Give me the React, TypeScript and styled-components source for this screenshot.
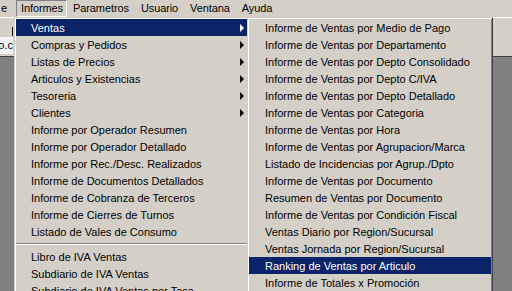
import styled, { createGlobalStyle } from 'styled-components';

const GlobalStyle = createGlobalStyle`
  html, body {
    margin: 0;
    padding: 0;
    overflow: hidden;
  }
`;

const Screen = styled.div`
  position: relative;
  width: 512px;
  height: 291px;
  overflow: hidden;
  background: #808080;
  font-family: "Liberation Sans", Tahoma, sans-serif;
  font-size: 11px;
  color: #000;
`;

const MenuBar = styled.div`
  display: flex;
  height: 17px;
  background: #d4d0c8;
`;

const BarItem = styled.div<{ $active?: boolean; $clipped?: boolean }>`
  box-sizing: border-box;
  height: 17px;
  line-height: 15px;
  padding: ${p => (p.$clipped ? '0 8px 0 0' : '0 5px')};
  border: 1px solid transparent;
  letter-spacing: -0.1px;
  ${p =>
    p.$active &&
    `
    border-color: #808080 #ffffff #ffffff #808080;
    padding: 0 3px 0 4px;
  `}
`;

const Toolbar = styled.div`
  display: flex;
  flex-direction: column;
  height: 40px;
  box-sizing: border-box;
  background: #d4d0c8;
  border-top: 1px solid #ffffff;
  border-bottom: 1px solid #404040;
`;

const ToolRow = styled.div`
  display: flex;
  height: 18px;
  align-items: center;
`;

const Caret = styled.div`
  width: 1px;
  height: 9px;
  margin-left: 12px;
  margin-top: 8px;
  background: #000;
`;

const Field = styled.div`
  width: 13px;
  height: 17px;
  display: flex;
  justify-content: flex-end;
  align-items: center;
  overflow: hidden;
  white-space: nowrap;
  background: #f4f4f4;
`;

const Dropdown = styled.div<{ $left: number; $width: number }>`
  position: absolute;
  top: 17px;
  left: ${p => p.$left}px;
  width: ${p => p.$width}px;
  box-sizing: border-box;
  padding: 1px;
  background: #d4d0c8;
  border: 1px solid;
  border-color: #d4d0c8 #404040 #404040 #d4d0c8;
  box-shadow: inset 1px 1px #ffffff, inset -1px -1px #808080;
`;

const Item = styled.div<{ $selected?: boolean; $indent: number }>`
  display: flex;
  align-items: center;
  height: 17px;
  padding-left: ${p => p.$indent}px;
  padding-right: 4px;
  white-space: nowrap;
  background: ${p => (p.$selected ? '#0a246a' : 'transparent')};
  color: ${p => (p.$selected ? '#ffffff' : '#000000')};
`;

const Arrow = styled.span<{ $selected?: boolean }>`
  margin-left: auto;
  width: 0;
  height: 0;
  border-top: 4px solid transparent;
  border-bottom: 4px solid transparent;
  border-left: 4px solid ${p => (p.$selected ? '#ffffff' : '#000000')};
`;

const Separator = styled.div`
  height: 0;
  margin: 3px 1px 3px 0;
  border-top: 1px solid #808080;
  border-bottom: 1px solid #ffffff;
`;

type Entry = { label: string; sub?: boolean } | 'sep';

const informes: Entry[] = [
  { label: 'Ventas', sub: true },
  { label: 'Compras y Pedidos', sub: true },
  { label: 'Listas de Precios', sub: true },
  { label: 'Articulos y Existencias', sub: true },
  { label: 'Tesoreria', sub: true },
  { label: 'Clientes', sub: true },
  { label: 'Informe por Operador Resumen' },
  { label: 'Informe por Operador Detallado' },
  { label: 'Informe por Rec./Desc. Realizados' },
  { label: 'Informe de Documentos Detallados' },
  { label: 'Informe de Cobranza de Terceros' },
  { label: 'Informe de Cierres de Turnos' },
  { label: 'Listado de Vales de Consumo' },
  'sep',
  { label: 'Libro de IVA Ventas' },
  { label: 'Subdiario de IVA Ventas' },
  { label: 'Subdiario de IVA Ventas por Tasa' },
];

const ventas = [
  'Informe de Ventas por Medio de Pago',
  'Informe de Ventas por Departamento',
  'Informe de Ventas por Depto Consolidado',
  'Informe de Ventas por Depto C/IVA',
  'Informe de Ventas por Depto Detallado',
  'Informe de Ventas por Categoria',
  'Informe de Ventas por Hora',
  'Informe de Ventas por Agrupacion/Marca',
  'Listado de Incidencias por Agrup./Dpto',
  'Informe de Ventas por Documento',
  'Resumen de Ventas por Documento',
  'Informe de Ventas por Condición Fiscal',
  'Ventas Diario por Region/Sucursal',
  'Ventas Jornada por Region/Sucursal',
  'Ranking de Ventas por Articulo',
  'Informe de Totales x Promoción',
];

export default function App() {
  return (
    <>
      <GlobalStyle />
      <Screen>
        <MenuBar>
          <BarItem $clipped>e</BarItem>
          <BarItem $active>Informes</BarItem>
          <BarItem>Parametros</BarItem>
          <BarItem>Usuario</BarItem>
          <BarItem>Ventana</BarItem>
          <BarItem>Ayuda</BarItem>
        </MenuBar>
        <Toolbar>
          <ToolRow>
            <Caret />
          </ToolRow>
          <ToolRow>
            <Field>Pedido.c</Field>
          </ToolRow>
        </Toolbar>

        <Dropdown $left={14} $width={236}>
          {informes.map((entry, i) =>
            entry === 'sep' ? (
              <Separator key={i} />
            ) : (
              <Item key={i} $indent={15} $selected={i === 0}>
                {entry.label}
                {entry.sub && <Arrow $selected={i === 0} />}
              </Item>
            )
          )}
        </Dropdown>

        <Dropdown $left={247} $width={246}>
          {ventas.map((label, i) => (
            <Item key={label} $indent={16} $selected={i === 14}>
              {label}
            </Item>
          ))}
        </Dropdown>
      </Screen>
    </>
  );
}
